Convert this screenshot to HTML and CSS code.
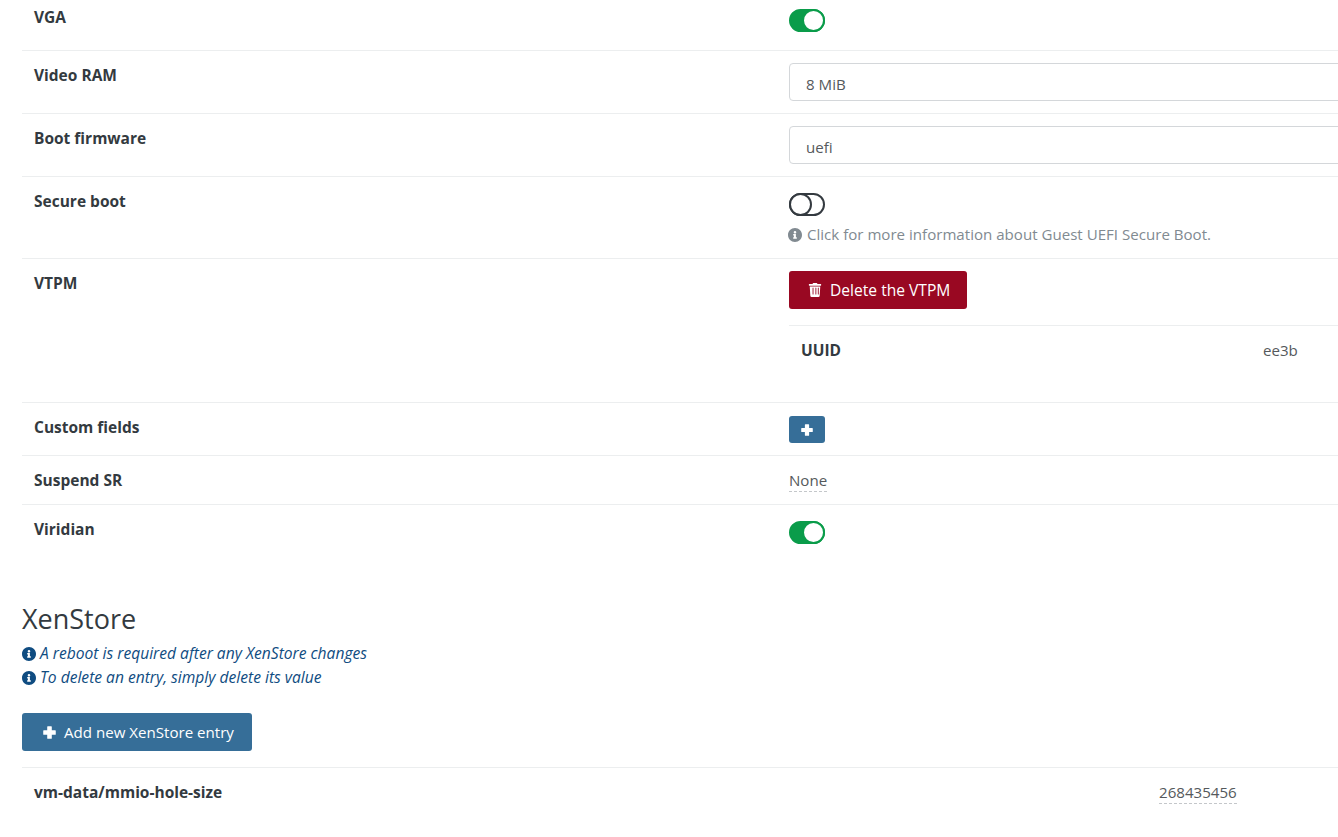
FILE: index.html
```html
<!DOCTYPE html>
<html lang="en">
<head>
<meta charset="utf-8">
<title>VM advanced</title>
<link rel="stylesheet" href="styles.css">
</head>
<body>
<svg class="defs" width="0" height="0" aria-hidden="true">
  <symbol id="info" viewBox="8 8 496 496"><path d="M256 8C119 8 8 119 8 256s111 248 248 248 248-111 248-248S393 8 256 8zm0 102c25 0 46 21 46 46s-21 46-46 46-46-21-46-46 21-46 46-46zm64 266c0 7-5 12-12 12H204c-7 0-12-5-12-12v-28c0-7 5-12 12-12h12v-64h-12c-7 0-12-5-12-12v-28c0-7 5-12 12-12h72c7 0 12 5 12 12v104h20c7 0 12 5 12 12z"/></symbol>
  <symbol id="plus" viewBox="0 0 448 448"><path d="M165 8a20 20 0 0 0-20 20v117H28a20 20 0 0 0-20 20v118a20 20 0 0 0 20 20h117v117a20 20 0 0 0 20 20h118a20 20 0 0 0 20-20V303h117a20 20 0 0 0 20-20V165a20 20 0 0 0-20-20H303V28a20 20 0 0 0-20-20z"/></symbol>
  <symbol id="trash" viewBox="0 0 448 512"><path d="M432 32H312l-9-19A24 24 0 0 0 281 0H167a24 24 0 0 0-22 13l-9 19H16A16 16 0 0 0 0 48v32a16 16 0 0 0 16 16h416a16 16 0 0 0 16-16V48a16 16 0 0 0-16-16zM53 467a48 48 0 0 0 48 45h246a48 48 0 0 0 48-45l21-339H32zm275-283a16 16 0 0 1 32 0v224a16 16 0 0 1-32 0zm-88 0a16 16 0 0 1 32 0v224a16 16 0 0 1-32 0zm-104 0a16 16 0 0 1 16-16 16 16 0 0 1 16 16v224a16 16 0 0 1-32 0z"/></symbol>
</svg>
<main class="page">
  <section class="table">
    <div class="row row-first">
      <div class="label">VGA</div>
      <div class="value"><span class="toggle on"></span></div>
    </div>
    <div class="row">
      <div class="label">Video RAM</div>
      <div class="value"><div class="select">8 MiB</div></div>
    </div>
    <div class="row">
      <div class="label">Boot firmware</div>
      <div class="value"><div class="select">uefi</div></div>
    </div>
    <div class="row">
      <div class="label">Secure boot</div>
      <div class="value">
        <span class="toggle off"></span>
        <div class="hint"><svg class="icon"><use href="#info"/></svg> Click for more information about Guest UEFI Secure Boot.</div>
      </div>
    </div>
    <div class="row">
      <div class="label">VTPM</div>
      <div class="value">
        <button class="btn btn-danger"><svg class="icon"><use href="#trash"/></svg>Delete the VTPM</button>
        <div class="vtpm">
          <div class="label">UUID</div>
          <div class="vtpm-id">ee3b</div>
        </div>
      </div>
    </div>
    <div class="row">
      <div class="label">Custom fields</div>
      <div class="value"><button class="btn btn-small"><svg class="icon"><use href="#plus"/></svg></button></div>
    </div>
    <div class="row">
      <div class="label">Suspend SR</div>
      <div class="value"><span class="editable">None</span></div>
    </div>
    <div class="row">
      <div class="label">Viridian</div>
      <div class="value"><span class="toggle on"></span></div>
    </div>
  </section>

  <h2 class="title">XenStore</h2>
  <p class="note"><svg class="icon"><use href="#info"/></svg> A reboot is required after any XenStore changes</p>
  <p class="note"><svg class="icon"><use href="#info"/></svg> To delete an entry, simply delete its value</p>
  <button class="btn btn-primary"><svg class="icon"><use href="#plus"/></svg>Add new XenStore entry</button>

  <section class="store">
    <div class="label">vm-data/mmio-hole-size</div>
    <div class="store-value"><span class="editable">268435456</span></div>
  </section>
</main>
</body>
</html>
```

FILE: styles.css
```css
*, *::after { box-sizing: border-box; }
html, body { margin: 0; height: 100%; overflow: hidden; background: #fff; }
body {
  font-family: "Open Sans", "Noto Sans", "Liberation Sans", sans-serif;
  font-size: 15.1px;
  line-height: 24px;
  color: #333a40;
}
.defs { position: absolute; }
.icon { fill: currentColor; display: inline-block; }

.page { width: 1560px; margin-top: -8px; padding-left: 22px; }

.row {
  display: grid;
  grid-template-columns: 755px 1fr;
  border-top: 1px solid #eceeef;
  padding: 12px;
}
.row-first { border-top: 0; padding-top: 13px; height: 58px; }
.label { font-weight: 700; font-size: 15.5px; }
.value { min-width: 0; }

.toggle {
  display: block;
  position: relative;
  width: 36px;
  height: 23px;
  border-radius: 12px;
  border: 2px solid #343a40;
  margin-top: 4px;
}
.toggle::after {
  content: "";
  position: absolute;
  top: -2px;
  width: 23px;
  height: 23px;
  border-radius: 50%;
  background: #fff;
  border: 2px solid #343a40;
}
.toggle.off::after { left: -2px; }
.toggle.on { background: #0a9c4a; border-color: #0a9c4a; }
.toggle.on::after { left: 11px; border-color: #0a9c4a; }

.select {
  height: 38px;
  border: 1px solid #d4d7da;
  border-radius: 4px;
  padding: 8px 16px;
  line-height: 24px;
  color: #55595c;
}

.hint { color: #818a91; margin-top: 6px; height: 24px; white-space: nowrap; }
.hint .icon { width: 14px; height: 14px; vertical-align: -2px; margin-left: -1px; margin-right: 1px; }

.btn {
  display: inline-flex;
  align-items: center;
  border: 0;
  border-radius: 3px;
  color: #fff;
  font: inherit;
  padding: 0;
}
.btn-danger { width: 178px; height: 38px; background: #990822; gap: 8px; padding-left: 19px; font-size: 15.6px; }
.btn-danger .icon { width: 14px; height: 14px; }
.btn-small { width: 36px; height: 27px; background: #366e98; justify-content: center; margin-top: 1px; vertical-align: top; }
.btn-small .icon { width: 12px; height: 12px; }
.btn-primary { width: 230px; height: 38px; background: #366e98; gap: 8px; padding-left: 21px; margin-top: 24px; }
.btn-primary .icon { width: 13px; height: 13px; }

.vtpm {
  display: grid;
  grid-template-columns: 462px 1fr;
  border-top: 1px solid #eceeef;
  margin-top: 16px;
  padding: 12px;
  height: 65px;
}
.vtpm-id { color: #55595c; }

.editable { border-bottom: 1px dashed #c4c7ca; display: inline-block; line-height: 21px; color: #55595c; }

.title { font-size: 27px; font-weight: 500; line-height: 32px; margin: 47px 0 6px; color: #333a40; }
.note { margin: 0; font-size: 15.6px; line-height: 24px; font-style: italic; color: #0f4c81; white-space: nowrap; }
.note .icon { width: 14px; height: 14px; vertical-align: -2px; }

.store {
  display: grid;
  grid-template-columns: 1125px 1fr;
  border-top: 1px solid #eceeef;
  margin-top: 16px;
  padding: 12px;
}
```
